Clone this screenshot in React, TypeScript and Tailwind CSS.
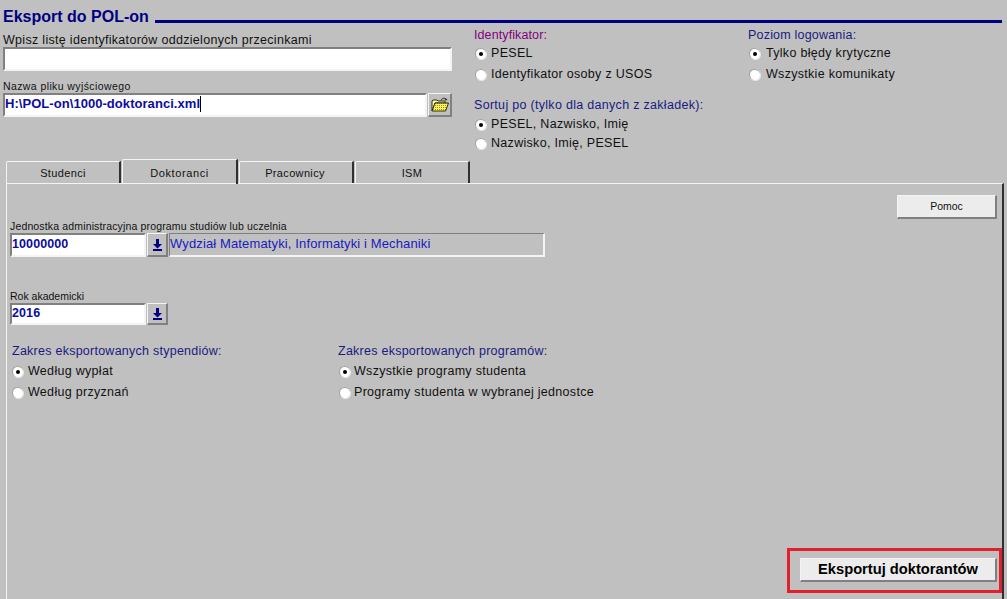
import React from 'react';

const Radio = ({ checked }: { checked?: boolean }) => (
  <span className="flex h-[11px] w-[11px] shrink-0 items-center justify-center rounded-full border-t border-l border-[#a0a0a0] bg-white shadow-[1px_1px_0_#e8e8e8]">
    {checked && <span className="h-[4px] w-[4px] rounded-full bg-black" />}
  </span>
);

const RadioRow = ({ label, checked, className }: { label: string; checked?: boolean; className: string }) => (
  <div className={`flex items-center pl-[1px] ${className}`}>
    <Radio checked={checked} />
    <span className="text-[12.5px] leading-[14px] tracking-[0.3px] text-[#111111]">{label}</span>
  </div>
);

const ArrowDown = () => (
  <svg width="9" height="12" viewBox="0 0 9 12">
    <path d="M3 0h3v5h3L4.500 9.500 0 5h3z" fill="#000080" />
    <rect x="0" y="10" width="9" height="2" fill="#000080" />
  </svg>
);

const Folder = () => (
  <svg width="18" height="16" viewBox="0 0 18 16">
    <defs>
      <pattern id="dither" width="2" height="2" patternUnits="userSpaceOnUse">
        <rect width="2" height="2" fill="#fff25a" />
        <rect width="1" height="1" fill="#9a9020" />
      </pattern>
    </defs>
    <path d="M10 3.500C11 1 14 0.500 15.500 2.500" fill="none" stroke="#202020" strokeWidth="1" />
    <path d="M14.500 1l2 2-2.500.5z" fill="#202020" />
    <path d="M1 14V4l1-1h4l1 1h7v2H4L1 14z" fill="#fffbb0" stroke="#303010" strokeWidth="1" />
    <path d="M1 14l3-8h13.500l-3 8z" fill="url(#dither)" stroke="#303010" strokeWidth="1" />
  </svg>
);

const tabs = [
  { name: 'Studenci', className: 'w-[115px] tracking-[0.35px]' },
  { name: 'Doktoranci', className: 'relative z-10 -mt-[2px] h-[25px] w-[116px] tracking-[0.6px]' },
  { name: 'Pracownicy', className: 'w-[115px] pr-[2px] tracking-[0.35px]' },
  { name: 'ISM', className: 'w-[115px] tracking-[0.35px]' },
];

const sunken = 'border-t-2 border-l-2 border-t-[#808080] border-l-[#808080] border-b-2 border-r-2 border-b-[#f4f4f4] border-r-[#f4f4f4]';
const raised = 'border-t border-l border-t-[#f4f4f4] border-l-[#f4f4f4] border-b-2 border-r-2 border-b-[#808080] border-r-[#808080]';

export default function App() {
  return (
    <div className="relative flex h-[599px] w-[1007px] flex-col overflow-hidden bg-[#c0c0c0] font-['Liberation_Sans',sans-serif]">
      <div className="flex items-end pl-[3px] pt-[9px]">
        <h1 className="text-[16px] font-bold leading-[16px] text-[#000080]">Eksport do POL-on</h1>
        <div className="mb-[2px] ml-[6px] mr-[5px] h-[3px] flex-1 bg-[#000080]" />
      </div>

      <div className="flex h-[136px]">
        <div className="w-[471px] pl-[3px] pt-[8px]">
          <div className="text-[12.5px] leading-[15px] tracking-[0.3px] text-[#111111]">Wpisz listę identyfikatorów oddzielonych przecinkami</div>
          <div className={`-mt-[1px] h-[24px] w-[449px] bg-white ${sunken}`} />
          <div className="mt-[9px] text-[10.5px] leading-[12px] tracking-[0.4px] text-[#111111]">Nazwa pliku wyjściowego</div>
          <div className="mt-[1px] flex">
            <div className={`flex h-[24px] w-[424px] items-center bg-white pb-[2px] text-[13px] font-bold tracking-[0.05px] text-[#0c0ca0] ${sunken}`}>
              H:\POL-on\1000-doktoranci.xml
              <span className="h-[16px] w-[1px] bg-black" />
            </div>
            <div className={`ml-[1px] flex h-[24px] w-[24px] items-center justify-center bg-[#c0c0c0] ${raised}`}>
              <Folder />
            </div>
          </div>
        </div>

        <div className="ml-[3px] w-[274px] pt-[3px]">
          <div className="text-[12.5px] leading-[15px] tracking-[0.1px] text-[#800080]">Identyfikator:</div>
          <RadioRow label="PESEL" checked className="mt-[3px] gap-[5px]" />
          <RadioRow label="Identyfikator osoby z USOS" className="mt-[7px] gap-[5px]" />
          <div className="mt-[17px] text-[12.5px] leading-[15px] tracking-[0.3px] text-[#1a1a80]">Sortuj po (tylko dla danych z zakładek):</div>
          <RadioRow label="PESEL, Nazwisko, Imię" checked className="mt-[4px] gap-[5px]" />
          <RadioRow label="Nazwisko, Imię, PESEL" className="mt-[5px] gap-[5px]" />
        </div>

        <div className="flex-1 pt-[3px]">
          <div className="text-[12.5px] leading-[15px] tracking-[0.2px] text-[#1a1a80]">Poziom logowania:</div>
          <RadioRow label="Tylko błędy krytyczne" checked className="mt-[3px] gap-[6px]" />
          <RadioRow label="Wszystkie komunikaty" className="mt-[7px] gap-[6px]" />
        </div>
      </div>

      <div className="flex h-[22px] gap-[1px] pl-[6px]">
        {tabs.map((tab) => (
          <div
            key={tab.name}
            className={`flex items-center justify-center rounded-tl-[2px] border-t border-l border-t-[#f4f4f4] border-l-[#f4f4f4] border-r-2 border-r-[#303030] pt-[2px] text-[11px] text-[#111111] ${tab.className}`}
          >
            {tab.name}
          </div>
        ))}
      </div>

      <div className="relative ml-[6px] mr-[3px] flex-1 border-t border-l border-r-2 border-t-[#f4f4f4] border-l-[#f4f4f4] border-r-[#303030] pl-[3px]">
        <div className="flex justify-end pr-[5px] pt-[11px]">
          <div className={`flex h-[24px] w-[100px] items-center justify-center bg-[#ececec] text-[10.5px] text-[#111111] ${raised}`}>Pomoc</div>
        </div>
        <div className="mt-[1px] text-[10.5px] leading-[12px] tracking-[0.15px] text-[#111111]">Jednostka administracyjna programu studiów lub uczelnia</div>
        <div className="mt-[1px] flex">
          <div className={`flex h-[24px] w-[136px] items-center bg-white pb-[2px] text-[12.5px] font-bold tracking-[0.1px] text-[#0c0ca0] ${sunken}`}>10000000</div>
          <div className={`ml-[1px] flex h-[24px] w-[21px] items-center justify-center ${raised}`}><ArrowDown /></div>
          <div className="ml-[1px] flex h-[24px] w-[376px] items-center border-r-2 border-b-2 border-r-[#f4f4f4] border-b-[#f4f4f4] border-t border-l border-t-[#808080] border-l-[#808080] pb-[2px] text-[13px] tracking-[0.13px] text-[#1a1ac0]">Wydział Matematyki, Informatyki i Mechaniki</div>
        </div>
        <div className="mt-[33px] text-[10.5px] leading-[12px] text-[#111111]">Rok akademicki</div>
        <div className="mt-[1px] flex">
          <div className={`flex h-[22px] w-[136px] items-center bg-white pb-[2px] text-[12.5px] font-bold tracking-[0.1px] text-[#0c0ca0] ${sunken}`}>2016</div>
          <div className={`ml-[1px] flex h-[22px] w-[21px] items-center justify-center ${raised}`}><ArrowDown /></div>
        </div>
        <div className="mt-[19px] flex">
          <div className="w-[328px] pl-[1px]">
            <div className="pl-[1px] text-[12.5px] leading-[15px] tracking-[0.25px] text-[#1a1a80]">Zakres eksportowanych stypendiów:</div>
            <RadioRow label="Według wypłat" checked className="mt-[5px] gap-[5px]" />
            <RadioRow label="Według przyznań" className="mt-[7px] gap-[5px]" />
          </div>
          <div>
            <div className="text-[12.5px] leading-[15px] tracking-[0.25px] text-[#1a1a80]">Zakres eksportowanych programów:</div>
            <RadioRow label="Wszystkie programy studenta" checked className="mt-[5px] gap-[4px]" />
            <RadioRow label="Programy studenta w wybranej jednostce" className="mt-[7px] gap-[4px]" />
          </div>
        </div>
      </div>

      <div className={`absolute left-[800px] top-[558px] flex h-[24px] w-[197px] items-center justify-center bg-[#ececec] text-[14.7px] font-bold text-black ${raised}`}>Eksportuj doktorantów</div>
      <div className="absolute left-[787px] top-[548px] h-[45px] w-[215px] border-[3px] border-[#e0202c]" />
    </div>
  );
}
